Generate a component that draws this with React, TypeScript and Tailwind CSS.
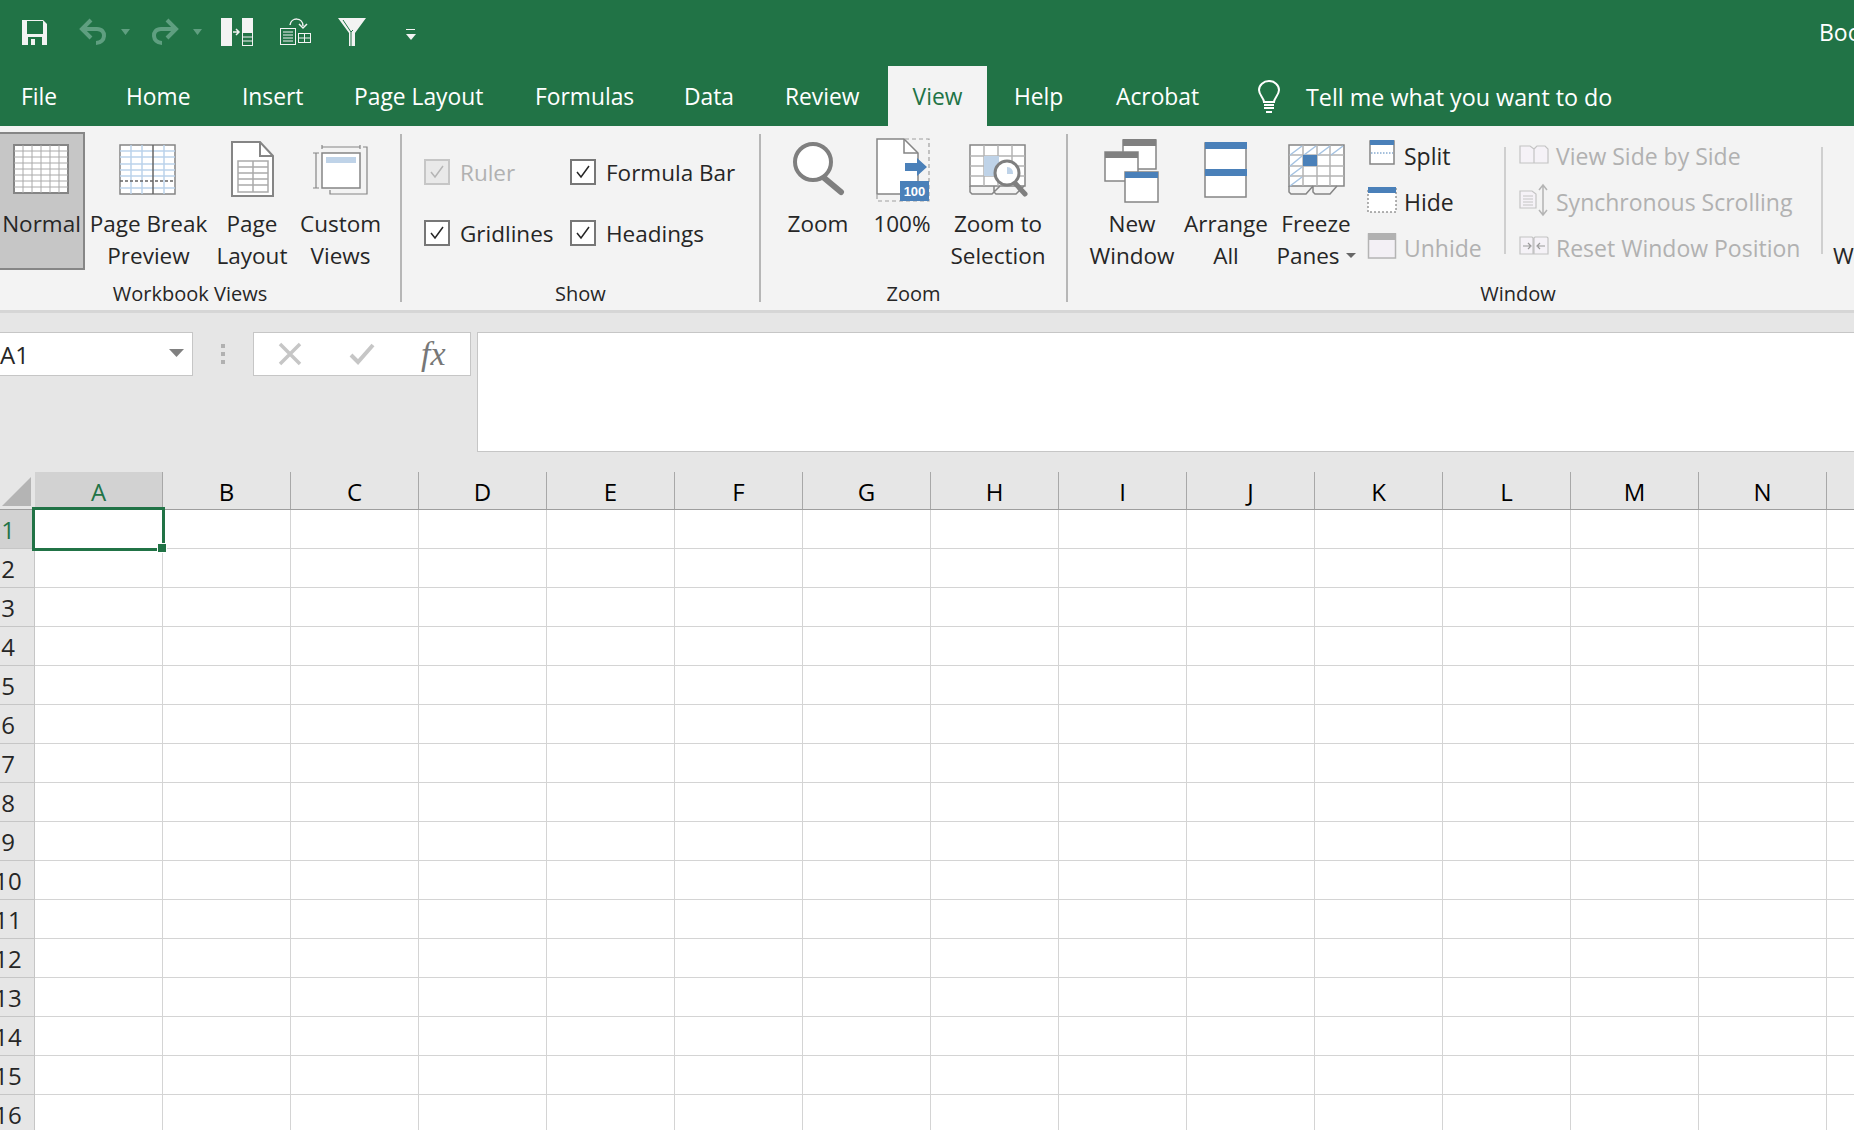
import React from 'react';

const G = '#217346';
const GRAY = '#858585';
const BLUE = '#4a80b9';

function TitleIcons() {
  return (
    <div className="flex h-[66px] items-start">
      <svg width="430" height="66" viewBox="0 0 430 66" className="shrink-0">
        {/* save */}
        <path d="M22 20h21l4 4v21H22z" fill="#f3f3f3" />
        <rect x="27" y="21" width="16" height="13" fill={G} />
        <rect x="28" y="37" width="14" height="8" fill={G} />
        <rect x="31" y="39" width="4" height="6" fill="#f3f3f3" />
        {/* undo */}
        <g fill="none" stroke="#5f9f80" strokeWidth="4">
          <path d="M91 20l-9 9 9 9" />
          <path d="M83 29h14c10 0 9 14 -1 14" />
          <path d="M167 20l9 9 -9 9" />
          <path d="M175 29h-14c-10 0 -9 14 1 14" />
        </g>
        <path d="M121 29h9l-4.500 6z M193 29h9l-4.500 6z" fill="#5f9f80" />
        {/* compare */}
        <rect x="221" y="18" width="11" height="28" fill="#f3f3f3" />
        <path d="M233 32h5 M236 29l3 3 -3 3" stroke="#f3f3f3" strokeWidth="1.500" fill="none" />
        <rect x="242" y="18" width="11" height="14" fill="#f3f3f3" />
        <rect x="242.500" y="32.500" width="10" height="13" fill="none" stroke="#f3f3f3" />
        <path d="M242 37h11 M242 41h11" stroke="#f3f3f3" />
        {/* print layout */}
        <rect x="280.500" y="28.500" width="15" height="16" fill="none" stroke="#f3f3f3" />
        <path d="M283 32h10 M283 35h10 M283 38h10 M283 41h10" stroke="#f3f3f3" />
        <rect x="298.500" y="33.500" width="12" height="9" fill="none" stroke="#f3f3f3" />
        <path d="M298 38h13 M304.500 33v9" stroke="#f3f3f3" />
        <path d="M290 25c1 -8 13 -8 13 1" fill="none" stroke="#f3f3f3" strokeWidth="1.500" />
        <path d="M299 24l4 4 4 -4" fill="none" stroke="#f3f3f3" strokeWidth="1.500" />
        {/* filter */}
        <path d="M338 18h28l-11 15v13h-6V33z" fill="#f3f3f3" />
        <path d="M343 20l8 12v14 M351 32l2 -2" fill="none" stroke={G} strokeWidth="1" />
        {/* customize */}
        <path d="M406 29.500h9" stroke="#f3f3f3" />
        <path d="M406 34h10l-5 6z" fill="#f3f3f3" />
      </svg>
      <span className="ml-[1389px] mt-[16px] text-[23px] leading-[32px] text-white whitespace-nowrap">Book1</span>
    </div>
  );
}

function Tabs() {
  return (
    <div className="flex h-[60px] items-start text-[22.8px] leading-[62px] text-white whitespace-nowrap">
      <span className="w-[100px] pl-[21px]">File</span>
      <span className="w-[116px] pl-[26px]">Home</span>
      <span className="w-[112px] pl-[26px]">Insert</span>
      <span className="w-[181px] pl-[26px]">Page Layout</span>
      <span className="w-[149px] pl-[26px]">Formulas</span>
      <span className="w-[101px] pl-[26px]">Data</span>
      <span className="w-[129px] pl-[26px]">Review</span>
      <span className="h-[60px] w-[99px] bg-[#f3f3f3] text-center text-[#217346]">View</span>
      <span className="w-[102px] pl-[27px]">Help</span>
      <span className="w-[168px] pl-[27px]">Acrobat</span>
      <svg width="24" height="34" viewBox="0 0 24 34" className="mt-[14px] shrink-0">
        <path d="M7 22c0 -4 -5 -7 -5 -12a10 9 0 0 1 20 0c0 5 -5 8 -5 12z" fill="none" stroke="#fff" strokeWidth="2" />
        <path d="M7 25h10 M7 28h10 M9 32h6" stroke="#fff" strokeWidth="2" />
      </svg>
      <span className="ml-[25px] text-[23.3px]">Tell me what you want to do</span>
    </div>
  );
}

function RibbonButton({ w, lines, caret, children }: { w: string; lines: string[]; caret?: boolean; children: React.ReactNode }) {
  return (
    <div className={`${w} flex shrink-0 flex-col items-center whitespace-nowrap`}>
      <div className="h-[74px] w-full">{children}</div>
      {lines.map((l, i) => (
        <span key={l} className="flex items-center text-[22.5px] leading-[32px]">
          {l}
          {caret && i === lines.length - 1 && (
            <svg width="10" height="6" viewBox="0 0 10 6" className="ml-[6px]">
              <path d="M0 0h10l-5 5z" fill="#666" />
            </svg>
          )}
        </span>
      ))}
    </div>
  );
}

function Icon({ w, children }: { w: number; children: React.ReactNode }) {
  return (
    <svg width={w} height="66" viewBox={`0 0 ${w} 66`} className="mt-[6px] overflow-visible">
      {children}
    </svg>
  );
}

function Check({ on = true, label }: { on?: boolean; label: string }) {
  return (
    <div className={`flex h-[30px] items-center text-[22.5px] whitespace-nowrap ${on ? '' : 'text-[#b1b1b1]'}`}>
      <svg width="26" height="26" viewBox="0 0 26 26" className="mr-[10px] shrink-0">
        <rect x="1" y="1" width="24" height="24" fill={on ? '#fff' : '#e9e9e9'} stroke={on ? '#777' : '#c6c6c6'} strokeWidth="2" />
        <path d="M7 13l4 5 8 -11" fill="none" stroke={on ? '#262626' : '#b5b5b5'} strokeWidth="1.500" />
      </svg>
      <span className="pt-[2px]">{label}</span>
    </div>
  );
}

function SmallRow({ w, label, off, children }: { w: string; label: string; off?: boolean; children: React.ReactNode }) {
  return (
    <div className={`flex h-[46px] items-center text-[23px] whitespace-nowrap ${off ? 'text-[#b1b1b1]' : ''}`}>
      <div className={`${w} h-[46px] shrink-0`}>{children}</div>
      {label}
    </div>
  );
}

function Small({ w, children }: { w: number; children: React.ReactNode }) {
  return <svg width={w} height="46" viewBox={`0 0 ${w} 46`}>{children}</svg>;
}

function Ribbon() {
  const p = { fill: 'none', stroke: GRAY, strokeWidth: 2 };
  return (
    <div className="flex h-[184px] items-start overflow-hidden bg-[#f3f3f3] pt-[8px] text-[#262626]">
      {/* Workbook Views */}
      <div className="flex h-[168px] w-[402px] shrink-0 flex-col border-r-2 border-[#b6b6b6]">
        <div className="flex h-[144px] items-start">
          <div className="-ml-[2px] -mt-[2px] h-[138px] w-[87px] shrink-0 border-2 border-[#868686] bg-[#c6c6c6]">
            <RibbonButton w="w-[83px]" lines={['Normal']}>
              <svg width="83" height="66" viewBox="0 0 83 66" className="ml-[13px] mt-[10px]">
                <rect x="1" y="1" width="54" height="48" fill="#fff" stroke={GRAY} strokeWidth="2" />
                <path d="M10 1v48 M19 1v48 M28 1v48 M37 1v48 M46 1v48 M1 7h54 M1 13h54 M1 19h54 M1 25h54 M1 31h54 M1 37h54 M1 43h54" stroke="#aaa" strokeWidth="1" />
              </svg>
            </RibbonButton>
          </div>
          <RibbonButton w="w-[127px]" lines={['Page Break', 'Preview']}>
            <Icon w={127}>
              <rect x="35" y="5" width="55" height="49" fill="#fff" stroke={GRAY} strokeWidth="1.500" />
              <path d="M46 5v49 M57 5v49 M79 5v49 M35 11h55 M35 17h55 M35 24h55 M35 30h55 M35 36h55 M35 48h55" stroke="#bcd3eb" strokeWidth="1.500" />
              <path d="M68 5v49" stroke="#666" strokeWidth="1.500" />
              <path d="M35 41h55" stroke="#666" strokeWidth="1.500" strokeDasharray="3 2" />
            </Icon>
          </RibbonButton>
          <RibbonButton w="w-[80px]" lines={['Page', 'Layout']}>
            <Icon w={80}>
              <path d="M20 2h28l13 14v40H20z" {...p} fill="#fff" />
              <path d="M48 2v14h13" {...p} />
              <rect x="26" y="21" width="30" height="31" fill="#fff" stroke="#aaa" strokeWidth="1.500" />
              <path d="M41 21v31 M26 27h30 M26 33h30 M26 39h30 M26 45h30" stroke="#aaa" strokeWidth="1.500" />
            </Icon>
          </RibbonButton>
          <RibbonButton w="w-[97px]" lines={['Custom', 'Views']}>
            <Icon w={97}>
              <rect x="30" y="13" width="38" height="35" fill="#fff" stroke={GRAY} strokeWidth="1.500" />
              <rect x="34" y="17" width="30" height="6" fill="#bfd3e8" />
              <path d="M30 7h38 M30 5v4 M68 5v4 M24 13v35 M21 13h6 M21 48h6 M71 7h4v47H38v-4" fill="none" stroke={GRAY} strokeWidth="1.200" />
            </Icon>
          </RibbonButton>
        </div>
        <div className="h-[24px] pr-[20px] text-center text-[20px] leading-[32px]">Workbook Views</div>
      </div>

      {/* Show */}
      <div className="flex h-[168px] w-[359px] shrink-0 flex-col border-r-2 border-[#b6b6b6]">
        <div className="flex h-[144px] pl-[22px] pt-[23px]">
          <div className="flex w-[146px] flex-col gap-[31px]">
            <Check on={false} label="Ruler" />
            <Check label="Gridlines" />
          </div>
          <div className="flex flex-col gap-[31px]">
            <Check label="Formula Bar" />
            <Check label="Headings" />
          </div>
        </div>
        <div className="h-[24px] text-center text-[20px] leading-[32px]">Show</div>
      </div>

      {/* Zoom */}
      <div className="flex h-[168px] w-[307px] shrink-0 flex-col border-r-2 border-[#b6b6b6]">
        <div className="flex h-[144px] pl-[17px]">
          <RibbonButton w="w-[80px]" lines={['Zoom']}>
            <Icon w={80}>
              <path d="M45 37l18 15" stroke="#7f7f7f" strokeWidth="6" strokeLinecap="round" />
              <circle cx="35" cy="22" r="18" fill="#fff" stroke="#7f7f7f" strokeWidth="4" />
            </Icon>
          </RibbonButton>
          <RibbonButton w="w-[88px]" lines={['100%']}>
            <Icon w={88}>
              <path d="M19 -1h27l14 14v41H19z" fill="#fff" stroke={GRAY} strokeWidth="1.500" />
              <path d="M46 -1v14h14" fill="none" stroke={GRAY} strokeWidth="1.500" />
              <path d="M47 -1h24v62H19v-7" fill="none" stroke="#a0a0a0" strokeWidth="1.200" strokeDasharray="4 3" />
              <path d="M47 23h12v-5l10 9 -10 9v-5H47z" fill={BLUE} />
              <rect x="42" y="41" width="29" height="20" fill={BLUE} />
              <text x="56.500" y="56" textAnchor="middle" fontSize="13" fontWeight="700" fill="#fff" fontFamily="Liberation Sans, sans-serif">100</text>
            </Icon>
          </RibbonButton>
          <RibbonButton w="w-[104px]" lines={['Zoom to', 'Selection']}>
            <Icon w={104}>
              <rect x="24" y="5" width="55" height="41" fill="#fff" stroke={GRAY} strokeWidth="1.500" />
              <path d="M38 5v41 M52 5v41 M66 5v41 M24 16h55 M24 26h55 M24 36h55" stroke="#b4b4b4" strokeWidth="1.500" />
              <rect x="38" y="16" width="15" height="20" fill="#bfd3e8" />
              <path d="M24 46v6l2 2h20l8 -8 M48 46v6l2 2h20l8 -8" fill="none" stroke={GRAY} strokeWidth="1.500" />
              <path d="M68 42l11 12" stroke="#7f7f7f" strokeWidth="5" strokeLinecap="round" />
              <circle cx="61" cy="33" r="12" fill="#fff" stroke="#7f7f7f" strokeWidth="3" />
              <path d="M61 27a6 6 0 0 1 6 7h-6z" fill="#bfd3e8" />
            </Icon>
          </RibbonButton>
        </div>
        <div className="h-[24px] text-center text-[20px] leading-[32px]">Zoom</div>
      </div>

      {/* Window */}
      <div className="flex h-[168px] w-[900px] shrink-0 flex-col">
        <div className="flex h-[144px] pl-[14px]">
          <RibbonButton w="w-[100px]" lines={['New', 'Window']}>
            <Icon w={100}>
              <rect x="41" y="0" width="33" height="29" fill="#fff" stroke={GRAY} strokeWidth="1.500" />
              <rect x="41" y="-1" width="33" height="7" fill="#808080" />
              <rect x="23" y="12" width="33" height="29" fill="#fff" stroke={GRAY} strokeWidth="1.500" />
              <rect x="23" y="12" width="33" height="6" fill="#808080" />
              <rect x="43" y="32" width="33" height="30" fill="#fff" stroke={GRAY} strokeWidth="1.500" />
              <rect x="43" y="32" width="33" height="6" fill={BLUE} />
            </Icon>
          </RibbonButton>
          <RibbonButton w="w-[88px]" lines={['Arrange', 'All']}>
            <Icon w={88}>
              <rect x="23" y="3" width="41" height="54" fill="#fff" stroke={GRAY} strokeWidth="1.500" />
              <rect x="23" y="2" width="42" height="7" fill={BLUE} />
              <rect x="23" y="29" width="42" height="7" fill={BLUE} />
            </Icon>
          </RibbonButton>
          <RibbonButton w="w-[92px]" lines={['Freeze', 'Panes']} caret>
            <Icon w={92}>
              <rect x="19" y="5" width="55" height="41" fill="#fff" stroke={GRAY} strokeWidth="1.500" />
              <path d="M33 5v41 M47 5v41 M60 5v41 M19 15h55 M19 26h55 M19 36h55" stroke="#b4b4b4" strokeWidth="1.500" />
              <path d="M20 15l12 -9 M34 15l12 -9 M48 15l12 -9 M61 15l12 -9 M20 26l12 -10 M20 36l12 -9 M20 46l12 -9" stroke="#a5c3e2" strokeWidth="1.500" />
              <rect x="33" y="15" width="14" height="11" fill={BLUE} />
              <path d="M19 46v6l2 2h15l7 -8 M43 46v6l2 2h15l7 -8" fill="none" stroke={GRAY} strokeWidth="1.500" />
            </Icon>
          </RibbonButton>
          <div className="-mt-[1px] w-[142px] shrink-0">
            <SmallRow w="w-[42px]" label="Split">
              <Small w={42}>
                <rect x="8" y="8" width="24" height="23" fill="#fff" stroke={GRAY} strokeWidth="1.500" />
                <rect x="8" y="7" width="24" height="5" fill={BLUE} />
                <path d="M9 20h22" stroke={BLUE} strokeDasharray="1.500 1.500" />
              </Small>
            </SmallRow>
            <SmallRow w="w-[42px]" label="Hide">
              <Small w={42}>
                <rect x="6" y="9" width="28" height="24" fill="#fff" stroke="#666" strokeDasharray="2 2" />
                <rect x="6" y="8" width="28" height="6" fill={BLUE} />
              </Small>
            </SmallRow>
            <SmallRow w="w-[42px]" label="Unhide" off>
              <Small w={42}>
                <rect x="6.500" y="9" width="27" height="24" fill="#f3f0f5" stroke="#b4b4b4" strokeWidth="1.500" />
                <rect x="6" y="8" width="28" height="7" fill="#b1b1b1" />
              </Small>
            </SmallRow>
          </div>
          <div className="mt-[13px] h-[107px] w-[2px] shrink-0 bg-[#cfcfcf]" />
          <div className="-mt-[1px] ml-[13px] w-[302px] shrink-0">
            <SmallRow w="w-[37px]" label="View Side by Side" off>
              <Small w={37}>
                <path d="M1 13h10l4 3v14H1z M15 16l3 -3h8l3 3v14H15z" fill="#f5f2f7" stroke="#c4c4c4" strokeWidth="1.200" />
              </Small>
            </SmallRow>
            <SmallRow w="w-[37px]" label="Synchronous Scrolling" off>
              <Small w={37}>
                <path d="M1 12h12l4 3v14H1z" fill="#f5f2f7" stroke="#c4c4c4" strokeWidth="1.200" />
                <path d="M4 17h10 M4 20h10 M4 23h10 M4 26h10" stroke="#c4c4c4" />
                <path d="M24 6v30 M20 11l4 -5 4 5 M20 31l4 5 4 -5" fill="none" stroke="#b4b4b4" strokeWidth="1.500" />
              </Small>
            </SmallRow>
            <SmallRow w="w-[37px]" label="Reset Window Position" off>
              <Small w={37}>
                <path d="M1 12h12l1 1v16H1z M15 13l1 -1h12l1 1v16H15z" fill="#f5f2f7" stroke="#c4c4c4" strokeWidth="1.200" />
                <path d="M4 21h7 M9 18l3 3 -3 3 M26 21h-7 M21 18l-3 3 3 3" fill="none" stroke="#9a9a9a" strokeWidth="1.200" />
              </Small>
            </SmallRow>
          </div>
          <div className="mt-[13px] h-[107px] w-[2px] shrink-0 bg-[#cfcfcf]" />
          <span className="ml-[10px] mt-[106px] text-[22.5px] leading-[32px]">Windows</span>
        </div>
        <div className="h-[24px] text-center text-[20px] leading-[32px]">Window</div>
      </div>
    </div>
  );
}

function FormulaBar() {
  return (
    <div className="flex h-[162px] items-start border-t-[3px] border-[#d6d6d6] bg-[#e6e6e6] pt-[19px] text-[#262626]">
      <div className="-ml-[2px] flex h-[44px] w-[195px] shrink-0 items-center border border-[#c6c6c6] bg-white pr-[8px] text-[24px]">
        <span className="pl-[1px] pt-[1px]">A1</span>
        <svg width="15" height="8" viewBox="0 0 15 8" className="ml-auto -mt-[2px]">
          <path d="M0 0h15l-7.500 8z" fill="#808080" />
        </svg>
      </div>
      <div className="flex h-[43px] w-[60px] shrink-0 flex-col items-center justify-center gap-[4px]">
        <i className="h-[4px] w-[4px] bg-[#b1b1b1]" />
        <i className="h-[4px] w-[4px] bg-[#b1b1b1]" />
        <i className="h-[4px] w-[4px] bg-[#b1b1b1]" />
      </div>
      <div className="flex h-[44px] w-[218px] shrink-0 items-center border border-[#c6c6c6] bg-white">
        <svg width="24" height="24" viewBox="0 0 24 24" className="ml-[24px]">
          <path d="M2 2l20 20 M22 2L2 22" stroke="#c6c6c6" strokeWidth="3.500" />
        </svg>
        <svg width="26" height="22" viewBox="0 0 26 22" className="ml-[47px]">
          <path d="M2 12l7 7L24 2" fill="none" stroke="#c6c6c6" strokeWidth="4" />
        </svg>
        <span className="ml-[46px] font-['Liberation_Serif',serif] text-[34px] italic leading-[30px] text-[#777]">fx</span>
      </div>
      <div className="ml-[6px] h-[120px] flex-1 border-b border-l border-t border-[#c6c6c6] bg-white" />
    </div>
  );
}

const COLS = ['A', 'B', 'C', 'D', 'E', 'F', 'G', 'H', 'I', 'J', 'K', 'L', 'M', 'N', 'O'];
const ROWS = Array.from({ length: 16 }, (_, i) => i + 1);

function Grid() {
  return (
    <div className="text-[24px] text-[#262626]">
      <div className="flex h-[38px] border-b border-[#9e9e9e] bg-[#e6e6e6]">
        <div className="h-[37px] w-[35px] shrink-0 pl-[2px] pt-[5px]">
          <svg width="29" height="29" viewBox="0 0 29 29"><path d="M29 0v29H0z" fill="#b4b4b4" /></svg>
        </div>
        {COLS.map((c, i) => (
          <div
            key={c}
            className={`flex h-[37px] w-[128px] shrink-0 items-center justify-center border-r border-[#a8a8a8] pt-[2px] ${i === 0 ? 'bg-[#d2d2d2] text-[#217346]' : 'text-black'}`}
          >
            {i === 14 ? '' : c}
          </div>
        ))}
      </div>
      {ROWS.map((r) => (
        <div key={r} className="flex h-[39px]">
          <div className={`relative h-[39px] w-[35px] shrink-0 overflow-hidden border-b border-r border-[#c6c6c6] ${r === 1 ? 'bg-[#d2d2d2] text-[#217346]' : 'bg-[#e6e6e6]'}`}>
            <span className="absolute -left-[18px] top-[3px] w-[52px] text-center leading-[34px]">{r}</span>
          </div>
          {COLS.map((c, i) => (
            <div key={c} className="relative h-[39px] w-[128px] shrink-0 border-b border-r border-[#d4d4d4] bg-white">
              {r === 1 && i === 0 && (
                <div className="absolute -left-[3px] -top-[3px] z-10 h-[44px] w-[133px] border-[3px] border-[#217346]">
                  <i className="absolute -bottom-[4px] -right-[4px] h-[8px] w-[8px] bg-[#217346] outline outline-1 outline-white" />
                </div>
              )}
            </div>
          ))}
        </div>
      ))}
    </div>
  );
}

export default function App() {
  return (
    <div className="h-[1130px] w-[1854px] overflow-hidden bg-white font-['Open_Sans','Noto_Sans',sans-serif]">
      <div className="h-[126px] overflow-hidden bg-[#217346]">
        <TitleIcons />
        <Tabs />
      </div>
      <Ribbon />
      <FormulaBar />
      <Grid />
    </div>
  );
}
